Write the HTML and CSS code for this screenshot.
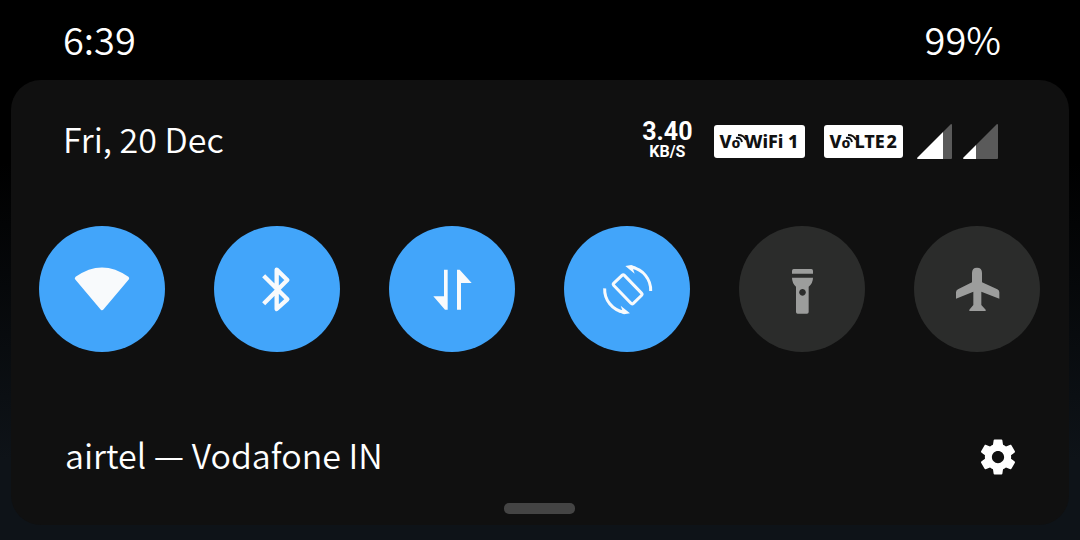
FILE: index.html
```html
<!DOCTYPE html>
<html lang="en">
	<head>
		<meta charset="UTF-8">
		<title>Quick settings</title>
		<link rel="stylesheet" href="styles.css">
	</head>
	<body>
		<header class="status">
			<span>6:39</span>
			<span>99%</span>
		</header>
		<main class="panel">
			<div class="top">
				<div class="date">Fri, 20 Dec</div>
				<div class="info">
					<div class="speed">
						<div class="num">3.40</div>
						<div class="unit">KB/S</div>
					</div>
					<div class="badges">
						<div class="badge">V<span class="o">o<svg viewBox="0 0 12 10"><path d="M1 4Q6 3 7 8M3 1Q9 1 11 6"/></svg></span>WiFi 1</div>
						<div class="badge">V<span class="o">o<svg viewBox="0 0 12 10"><path d="M1 4Q6 3 7 8M3 1Q9 1 11 6"/></svg></span>LTE&#8202;2</div>
					</div>
					<div class="signals">
						<svg class="signal" viewBox="0 0 35 35"><path class="dim" d="M26 8L34 0Q35 0 35 1V34Q35 35 34 35H26z"/><path d="M26 8V35H1Q0 35 0 34z"/></svg>
						<svg class="signal" viewBox="0 0 35 35"><path class="dim" d="M13 21L34 0Q35 0 35 1V34Q35 35 34 35H13z"/><path d="M13 21V35H1Q0 35 0 34z"/></svg>
					</div>
				</div>
			</div>
			<div class="tiles">
				<button class="tile on" aria-label="Wi-Fi">
					<svg viewBox="0 0 378 378"><path d="M113 157Q189 103 265 157L189 247z" stroke="currentColor" stroke-width="11" stroke-linejoin="round"/></svg>
				</button>
				<button class="tile on" aria-label="Bluetooth">
					<svg viewBox="0 0 378 378"><path d="M149 149L220 220L188 249V131L220 162L149 233" fill="none" stroke="currentColor" stroke-width="13" stroke-linejoin="round"/></svg>
				</button>
				<button class="tile on" aria-label="Mobile data">
					<svg viewBox="0 0 378 378"><path d="M165 131h11v120h-8L133 211h32zM204 251V131h8L248 171H216V251z"/></svg>
				</button>
				<button class="tile on" aria-label="Auto rotate">
					<svg viewBox="0 0 378 378">
						<rect x="149" y="168" width="84" height="44" rx="5" transform="rotate(46 191 190)" fill="none" stroke="currentColor" stroke-width="9"/>
						<g id="arrow">
							<path d="M260 195A69 69 0 0 0 203 124" fill="none" stroke="currentColor" stroke-width="9"/>
							<path d="M184 120L202 117L219 124L207 129L212 143z"/>
						</g>
						<use href="#arrow" transform="rotate(180 191 191)"/>
					</svg>
				</button>
				<button class="tile" aria-label="Flashlight">
					<svg viewBox="0 0 378 378">
						<path d="M159 143V134Q159 129 164 129H217Q222 129 222 134V143z"/>
						<path fill-rule="evenodd" d="M159 155H222Q222 171 209 182V258Q209 263 204 263H176Q171 263 171 258V182Q159 171 159 155zM190 189a10 10 0 1 0 1 0z"/>
					</svg>
				</button>
				<button class="tile" aria-label="Airplane mode">
					<svg viewBox="0 0 378 378"><path d="M174 141Q174 125 189 125Q204 125 204 141V169L250 190Q256 193 256 199V218L202 197V237L215 251V255H166V251L178 237V197L126 218V199Q126 193 132 190L174 169z"/></svg>
				</button>
			</div>
			<div class="bottom">
				<div class="carrier">airtel — Vodafone IN</div>
				<button class="gear" aria-label="Settings">
					<svg viewBox="0 0 24 24"><path d="M19.43 12.98c.04-.32.07-.64.07-.98s-.03-.66-.07-.98l2.11-1.65c.19-.15.24-.42.12-.64l-2-3.46c-.12-.22-.39-.3-.61-.22l-2.49 1c-.52-.4-1.08-.73-1.69-.98l-.38-2.65C14.46 2.18 14.25 2 14 2h-4c-.25 0-.46.18-.49.42l-.38 2.65c-.61.25-1.17.59-1.69.98l-2.49-1c-.23-.09-.49 0-.61.22l-2 3.46c-.13.22-.07.49.12.64l2.11 1.65c-.04.32-.07.65-.07.98s.03.66.07.98l-2.11 1.65c-.19.15-.24.42-.12.64l2 3.46c.12.22.39.3.61.22l2.49-1c.52.4 1.08.73 1.69.98l.38 2.65c.03.24.24.42.49.42h4c.25 0 .46-.18.49-.42l.38-2.65c.61-.25 1.17-.59 1.69-.98l2.49 1c.23.09.49 0 .61-.22l2-3.46c.12-.22.07-.49-.12-.64l-2.11-1.65zM12 15.5c-1.93 0-3.5-1.57-3.5-3.5s1.57-3.5 3.5-3.5 3.5 1.57 3.5 3.5-1.57 3.5-3.5 3.5z"/></svg>
				</button>
			</div>
			<div class="handle"></div>
		</main>
	</body>
</html>
```
FILE: styles.css
```css
*{
	box-sizing:border-box;
}
body{
	margin:0;
	min-height:100vh;
	background:linear-gradient(#000 30%, #0e1318 85%);
	color:#fff;
	font-family:"Noto Sans CJK SC","Noto Sans",sans-serif;
	font-weight:350;
}
svg{
	display:block;
	fill:currentColor;
}
button{
	padding:0;
	border:none;
	background:none;
	color:inherit;
	cursor:pointer;
}
.status{
	display:flex;
	justify-content:space-between;
	align-items:center;
	height:80px;
	padding:0 79px 2px 63px;
	font-size:38px;
	line-height:40px;
}
.panel{
	margin:0 11px;
	padding:40px 29px 11px 28px;
	border-radius:30px;
	background:#101010;
}
.top,.bottom{
	display:flex;
	justify-content:space-between;
	align-items:center;
	font-size:34px;
	line-height:38px;
}
.top{
	padding:0 42px 0 24px;
}
.date,.carrier{
	padding-bottom:4px;
}
.info{
	display:flex;
	align-items:center;
	gap:14px;
}
.speed{
	margin-right:7px;
	font-family:Roboto,sans-serif;
	font-weight:700;
	text-align:center;
}
.num{
	font-size:25px;
	line-height:22px;
}
.unit{
	font-size:16px;
	line-height:18px;
}
.badges{
	display:flex;
	gap:19px;
}
.badge{
	height:33px;
	padding:0 6px;
	border-radius:3px;
	background:#fff;
	color:#111;
	font-family:"Noto Sans",sans-serif;
	font-size:18px;
	font-weight:800;
	line-height:33px;
}
.o{
	position:relative;
	margin-right:4px;
	font-size:14px;
}
.o svg{
	position:absolute;
	left:3px;
	top:1px;
	width:12px;
	height:10px;
	fill:none;
	stroke:currentColor;
	stroke-width:2;
}
.signals{
	display:flex;
	gap:11px;
}
.signal{
	width:35px;
	height:35px;
}
.dim{
	fill:#5a5a5a;
}
.tiles{
	display:flex;
	justify-content:space-between;
	margin-top:64px;
}
.tile{
	width:126px;
	height:126px;
	border-radius:50%;
	background:#2b2c2b;
	color:#9c9d9c;
}
.on{
	background:#42a5fa;
	color:#f8fafc;
}
.bottom{
	margin-top:84px;
	padding:0 21px 0 26px;
}
.gear svg{
	width:42px;
	height:42px;
}
.handle{
	width:71px;
	height:11px;
	margin:25px auto 0;
	border-radius:5px;
	background:#444;
}
```
